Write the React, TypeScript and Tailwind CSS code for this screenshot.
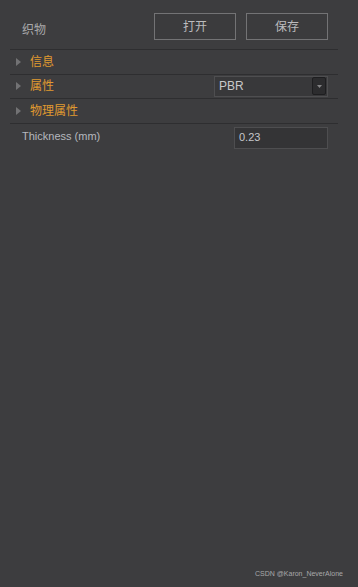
import React from "react";

const Caret = () => (
  <svg width="5" height="8" viewBox="0 0 5 8" className="shrink-0">
    <polygon points="0,0 5,4 0,8" fill="#727274" />
  </svg>
);

const Section = ({ title, children }: { title: string; children?: React.ReactNode }) => (
  <div className="flex items-center h-[24.5px] border-b border-[#2e2e30] pl-[6px] pr-[10px]">
    <Caret />
    <span className="ml-[9px] text-[12px] text-[#e09a30]">{title}</span>
    <div className="ml-auto">{children}</div>
  </div>
);

const App = () => {
  return (
    <div
      className="w-[358px] h-[587px] bg-[#3d3d3f] flex flex-col"
      style={{ fontFamily: '"Liberation Sans", "Noto Sans CJK SC", sans-serif' }}
    >
      <div className="ml-[10px] w-[328px] flex flex-col">
        <div className="flex items-start h-[50px] pt-[13px] border-b border-[#2e2e30]">
          <span className="ml-[12px] mt-[8px] text-[12px] text-[#a8a8aa]">织物</span>
          <div className="ml-auto flex gap-[10px] mr-[10px]">
            <button className="w-[82px] h-[27px] border border-[#737375] bg-[#3b3b3d] text-[12px] text-[#bcbcbe]">
              打开
            </button>
            <button className="w-[82px] h-[27px] border border-[#737375] bg-[#3b3b3d] text-[12px] text-[#bcbcbe]">
              保存
            </button>
          </div>
        </div>
        <Section title="信息" />
        <Section title="属性">
          <div className="w-[114px] h-[21px] bg-[#38383a] border border-[#4e4e50] flex items-center pl-[4px] pr-[1px]">
            <span className="text-[12px] text-[#c8c8ca]">PBR</span>
            <div className="ml-auto w-[14px] h-[18px] rounded-[2px] bg-[#2c2c2e] border border-[#1e1e20] flex items-center justify-center">
              <svg width="5" height="3" viewBox="0 0 5 3">
                <polygon points="0,0 5,0 2.5,3" fill="#858587" />
              </svg>
            </div>
          </div>
        </Section>
        <Section title="物理属性" />
        <div className="flex items-center h-[26px] pr-[10px]">
          <span className="ml-[12px] text-[11px] text-[#b6b8be]">Thickness (mm)</span>
          <div className="ml-auto w-[94px] h-[22px] bg-[#343436] border border-[#4e4e50] flex items-center pl-[4px] mt-[2px]">
            <span className="text-[11px] text-[#c4c6ca]">0.23</span>
          </div>
        </div>
      </div>
      <div className="mt-auto mb-[8px] mr-[15px] self-end text-[7px] text-[#a8a8aa]">CSDN @Karon_NeverAlone</div>
    </div>
  );
};

export default App;
